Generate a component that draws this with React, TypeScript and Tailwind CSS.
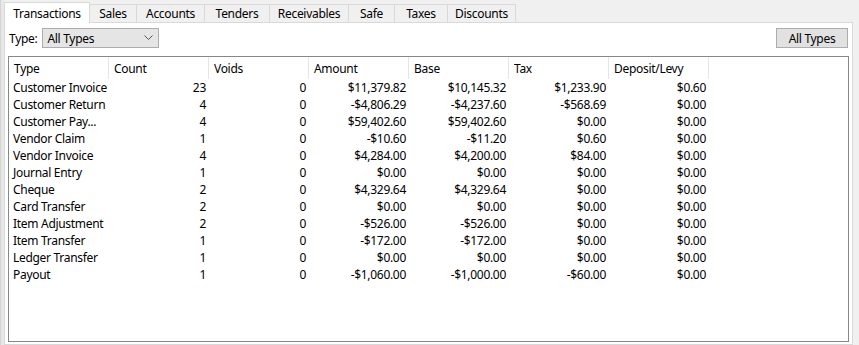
import React from "react";

const tabs = [
  { name: "Transactions", w: "w-[86px]" },
  { name: "Sales", w: "w-[48px]" },
  { name: "Accounts", w: "w-[69px]" },
  { name: "Tenders", w: "w-[66px]" },
  { name: "Receivables", w: "w-[80px]" },
  { name: "Safe", w: "w-[47px]" },
  { name: "Taxes", w: "w-[54px]" },
  { name: "Discounts", w: "w-[69px]" },
];

const columns = ["Type", "Count", "Voids", "Amount", "Base", "Tax", "Deposit/Levy"];

const rows = [
  ["Customer Invoice", "23", "0", "$11,379.82", "$10,145.32", "$1,233.90", "$0.60"],
  ["Customer Return", "4", "0", "-$4,806.29", "-$4,237.60", "-$568.69", "$0.00"],
  ["Customer Pay...", "4", "0", "$59,402.60", "$59,402.60", "$0.00", "$0.00"],
  ["Vendor Claim", "1", "0", "-$10.60", "-$11.20", "$0.60", "$0.00"],
  ["Vendor Invoice", "4", "0", "$4,284.00", "$4,200.00", "$84.00", "$0.00"],
  ["Journal Entry", "1", "0", "$0.00", "$0.00", "$0.00", "$0.00"],
  ["Cheque", "2", "0", "$4,329.64", "$4,329.64", "$0.00", "$0.00"],
  ["Card Transfer", "2", "0", "$0.00", "$0.00", "$0.00", "$0.00"],
  ["Item Adjustment", "2", "0", "-$526.00", "-$526.00", "$0.00", "$0.00"],
  ["Item Transfer", "1", "0", "-$172.00", "-$172.00", "$0.00", "$0.00"],
  ["Ledger Transfer", "1", "0", "$0.00", "$0.00", "$0.00", "$0.00"],
  ["Payout", "1", "0", "-$1,060.00", "-$1,000.00", "-$60.00", "$0.00"],
];

export default function App() {
  return (
    <div className="w-[859px] h-[345px] bg-[#f0f0f0] flex overflow-hidden text-[12px] tracking-[-0.3px] text-black font-['Noto_Sans',sans-serif] leading-none">
      {/* window edge */}
      <div className="w-[4px] h-full bg-[#e8e8e8] border-l border-[#d4d4d4]" />

      <div className="w-[849px] flex flex-col">
        {/* tab strip */}
        <div className="h-[22px] flex items-end">
          {tabs.map((t, i) =>
            i === 0 ? (
              <div
                key={t.name}
                className={`${t.w} h-[21px] bg-white border border-b-0 border-[#d9d9d9] flex items-center justify-center -mb-px relative z-10 pt-[1px]`}
              >
                {t.name}
              </div>
            ) : (
              <div
                key={t.name}
                className={`${t.w} h-[18px] bg-[#f0f0f0] border border-b-0 border-[#d9d9d9] -ml-px flex items-center justify-center pt-[1px]`}
              >
                {t.name}
              </div>
            )
          )}
        </div>

        {/* tab page */}
        <div className="flex-1 bg-white border border-[#d9d9d9] flex flex-col">
          <div className="mt-[5px] h-[20px] flex items-center pl-[4px] pr-[4px]">
            <span className="mr-[5px] pt-[1px]">Type:</span>
            <div className="w-[117px] h-[20px] bg-[#e5e5e5] border border-[#adadad] flex items-center justify-between pl-[4px] pr-[5px]">
              <span className="pt-[1px]">All Types</span>
              <svg width="9" height="6" viewBox="0 0 9 6">
                <polyline points="0.5,0.5 4.5,4.5 8.5,0.5" fill="none" stroke="#555" strokeWidth="1" />
              </svg>
            </div>
            <div className="ml-auto w-[72px] h-[20px] bg-[#e1e1e1] border border-[#adadad] flex items-center justify-center pt-[1px]">
              All Types
            </div>
          </div>

          {/* list view */}
          <div className="mt-[8px] ml-[3px] w-[841px] h-[286px] border border-[#828790] flex flex-col">
            <div className="h-[22px] flex">
              {columns.map((c) => (
                <div
                  key={c}
                  className="w-[100px] h-full border-r border-[#e5e5e5] flex items-center pl-[5px] pt-[1px]"
                >
                  {c}
                </div>
              ))}
            </div>
            {rows.map((r) => (
              <div key={r[0]} className="h-[17px] flex items-center pt-[1px]">
                {r.map((v, i) =>
                  i === 0 ? (
                    <div key={i} className="w-[100px] pl-[4px] whitespace-nowrap">
                      {v}
                    </div>
                  ) : (
                    <div key={i} className="w-[100px] text-right pr-[3px] whitespace-nowrap">
                      {v}
                    </div>
                  )
                )}
              </div>
            ))}
          </div>
        </div>
      </div>
    </div>
  );
}
